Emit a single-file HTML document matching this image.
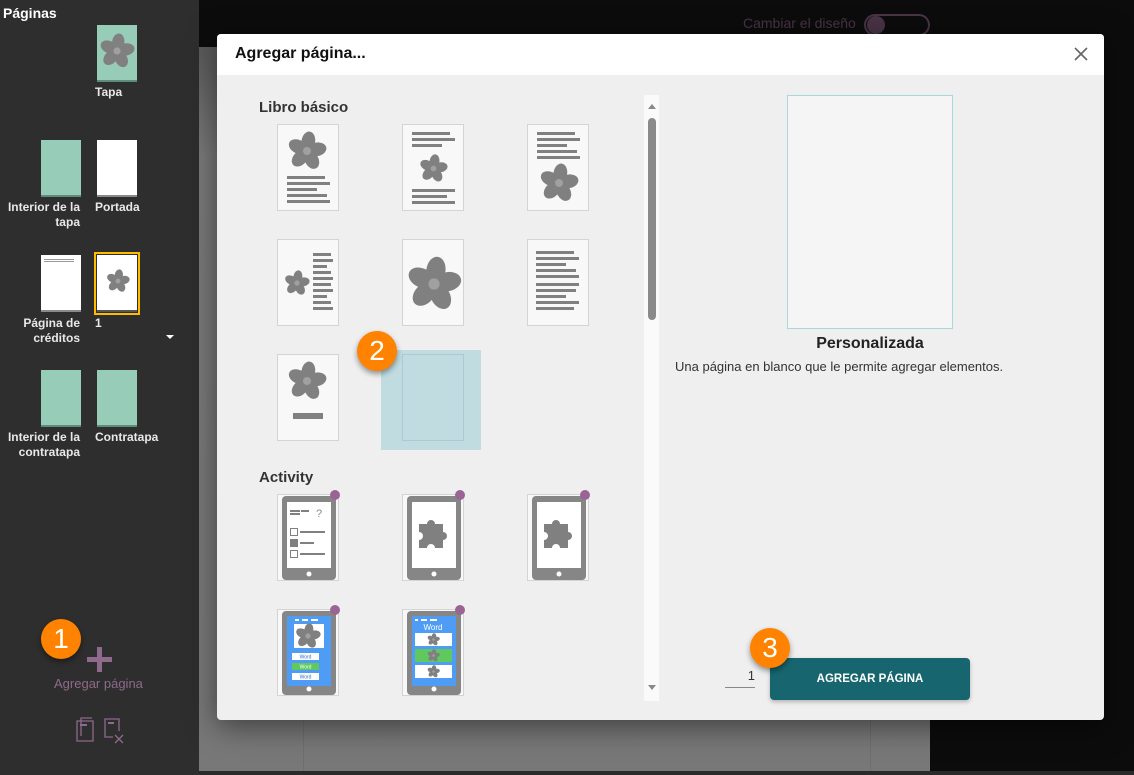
<!DOCTYPE html>
<html><head><meta charset="utf-8">
<style>
*{box-sizing:border-box;margin:0;padding:0}
body{width:1134px;height:775px;overflow:hidden;background:#0c0c0c;font-family:"Liberation Sans",sans-serif;position:relative}
.a{position:absolute}
.side{left:0;top:0;width:199px;height:775px;background:#2e2e2e}
.lbl{color:#e8e8e8;font-size:12px;line-height:15px;font-weight:bold}
.th{position:absolute;width:40px;height:57px;border-bottom:2px solid #8a8a8a}
.g{background:#97cdb8;border-bottom-color:#5f8c7a}
.w{background:#fff}
.mod{left:217px;top:34px;width:887px;height:686px;background:#efefef;border-radius:4px;overflow:hidden;box-shadow:0 6px 30px rgba(0,0,0,.5)}
.hd{left:0;top:0;width:887px;height:41px;background:#fff}
.t{position:absolute;width:62px;height:87px;background:#f8f8f8;border:1px solid #d4d4d4}
.badge{position:absolute;width:40px;height:40px;border-radius:50%;background:#ff8200;color:#fff;font-size:28px;text-align:center;line-height:40px;box-shadow:0 3px 6px rgba(0,0,0,.4)}
.h{font-weight:bold;color:#333;font-size:15px}
</style></head><body>
<svg width="0" height="0" style="position:absolute">
<defs>
<g id="fl">
<ellipse cx="50" cy="25" rx="17" ry="24" fill="#808080" transform="rotate(8 50 50)"/>
<ellipse cx="50" cy="25" rx="17" ry="24" fill="#808080" transform="rotate(80 50 50)"/>
<ellipse cx="50" cy="25" rx="17" ry="24" fill="#808080" transform="rotate(152 50 50)"/>
<ellipse cx="50" cy="25" rx="17" ry="24" fill="#808080" transform="rotate(224 50 50)"/>
<ellipse cx="50" cy="25" rx="17" ry="24" fill="#808080" transform="rotate(296 50 50)"/>
<circle cx="50" cy="50" r="10" fill="#a0a0a0"/>
</g>
<g id="tab">
<rect x="4" y="1" width="54" height="84" rx="4" fill="#868686"/>
<circle cx="31" cy="79" r="2.5" fill="#fff"/>
</g>
<g id="puz">
<path d="M16 29h8a4 4 0 1 1 8 0h8v8a4 4 0 1 1 0 8v8h-8a4 4 0 1 0 -8 0h-8v-8a4 4 0 1 0 0-8z" fill="#808080"/>
</g>
</defs>
</svg>

<div class="a" style="left:199px;top:47px;width:731px;height:725px;background:linear-gradient(#5a5a5a,#7a7a7a 15%,#787878)"></div>
<div class="a" style="left:303px;top:47px;width:1px;height:725px;background:#6a7070"></div>
<div class="a" style="left:870px;top:47px;width:1px;height:725px;background:#6a7070"></div>
<div class="a" style="left:0;top:771px;width:1134px;height:4px;background:#2a2a2a"></div>
<div class="a" style="left:743px;top:15px;color:#4a3447;font-size:14px">Cambiar el diseño</div>
<div class="a" style="left:864px;top:14px;width:66px;height:22px;border:2px solid #4a3447;border-radius:11px"></div>
<div class="a" style="left:867px;top:16px;width:18px;height:18px;border-radius:50%;background:#4a3447"></div>

<div class="a side">
<div class="a" style="left:3px;top:5px;color:#fff;font-weight:bold;font-size:14px">Páginas</div>
<div class="th g" style="left:97px;top:25px"><svg class="a" style="left:2px;top:8px" width="36" height="36" viewBox="0 0 100 100"><use href="#fl"/></svg></div>
<div class="a lbl" style="left:95px;top:85px">Tapa</div>
<div class="th g" style="left:41px;top:140px"></div>
<div class="th w" style="left:97px;top:140px"></div>
<div class="a lbl" style="left:0;width:80px;text-align:right;top:200px">Interior de la tapa</div>
<div class="a lbl" style="left:95px;top:200px">Portada</div>
<div class="th w" style="left:41px;top:255px"><div class="a" style="left:3px;top:4px;width:30px;height:4px;background:repeating-linear-gradient(#999 0 1px,#fff 1px 2px)"></div></div>
<div class="a" style="left:94px;top:252px;width:46px;height:63px;border:2px solid #ffbb00"></div>
<div class="th w" style="left:97px;top:255px;border-bottom-color:#555"><svg class="a" style="left:9px;top:14px" width="24" height="24" viewBox="0 0 100 100"><use href="#fl"/></svg></div>
<div class="a lbl" style="left:0;width:80px;text-align:right;top:316px">Página de créditos</div>
<div class="a lbl" style="left:95px;top:316px">1</div>
<div class="a" style="left:166px;top:335px;border-left:4px solid transparent;border-right:4px solid transparent;border-top:4px solid #fff"></div>
<div class="th g" style="left:41px;top:370px"></div>
<div class="th g" style="left:97px;top:370px"></div>
<div class="a lbl" style="left:0;width:80px;text-align:right;top:430px">Interior de la contratapa</div>
<div class="a lbl" style="left:95px;top:430px">Contratapa</div>
<div class="a" style="left:87px;top:657px;width:25px;height:5px;background:#8e6a8c"></div>
<div class="a" style="left:97px;top:647px;width:5px;height:25px;background:#8e6a8c"></div>
<div class="a" style="left:54px;top:676px;color:#8e6a8c;font-size:13px">Agregar página</div>
<svg class="a" style="left:74px;top:716px" width="52" height="30" viewBox="0 0 52 30" fill="none" stroke="#8e6a8c" stroke-width="1.3">
<path d="M7 20V2h11M3 25V5h16v20z"/><path d="M6 9h7" stroke-width="2"/>
<path d="M31 18V3h14v12M31 18v3h8"/><path d="M34 7h6" stroke-width="2"/><path d="M41 19l8 8M49 19l-8 8"/>
</svg>
</div>
<div class="badge" style="left:41px;top:619px">1</div>

<div class="a mod">
<div class="a hd"><div class="a" style="left:18px;top:11px;font-weight:bold;font-size:16px;color:#111">Agregar página...</div>
<svg class="a" style="left:857px;top:13px" width="14" height="14" viewBox="0 0 14 14" stroke="#666" stroke-width="1.6"><path d="M1 1l12 12M13 1L1 13"/></svg></div>
<div class="a h" style="left:42px;top:65px">Libro básico</div>
<div class="a h" style="left:42px;top:435px">Activity</div>
<div class="a" style="left:427px;top:61px;width:15px;height:606px;background:#fafafa"></div>
<div class="a" style="left:431px;top:70px;border-left:4px solid transparent;border-right:4px solid transparent;border-bottom:5px solid #888"></div>
<div class="a" style="left:431px;top:84px;width:8px;height:202px;border-radius:4px;background:#8a8a8a"></div>
<div class="a" style="left:431px;top:651px;border-left:4px solid transparent;border-right:4px solid transparent;border-top:5px solid #888"></div>
<div class="t" style="left:60px;top:90px"><svg width="60" height="85" viewBox="0 0 60 85"><svg x="9" y="6" width="40" height="40" viewBox="0 0 100 100"><use href="#fl"/></svg><g fill="#808080"><rect x="9" y="51" width="38" height="3"/><rect x="9" y="57" width="43" height="3"/><rect x="9" y="63" width="30" height="3"/><rect x="9" y="69" width="40" height="3"/><rect x="9" y="75" width="43" height="3"/></g></svg></div>
<div class="t" style="left:185px;top:90px"><svg width="60" height="85" viewBox="0 0 60 85"><g fill="#808080"><rect x="9" y="7" width="38" height="3"/><rect x="9" y="13" width="43" height="3"/><rect x="9" y="19" width="30" height="3"/><rect x="9" y="64" width="43" height="3"/><rect x="9" y="70" width="35" height="3"/><rect x="9" y="76" width="43" height="3"/></g><svg x="16" y="29" width="29" height="29" viewBox="0 0 100 100"><use href="#fl"/></svg></svg></div>
<div class="t" style="left:310px;top:90px"><svg width="60" height="85" viewBox="0 0 60 85"><g fill="#808080"><rect x="9" y="7" width="38" height="3"/><rect x="9" y="13" width="43" height="3"/><rect x="9" y="19" width="30" height="3"/><rect x="9" y="25" width="40" height="3"/><rect x="9" y="31" width="43" height="3"/></g><svg x="11" y="38" width="40" height="40" viewBox="0 0 100 100"><use href="#fl"/></svg></svg></div>
<div class="t" style="left:60px;top:205px"><svg width="60" height="85" viewBox="0 0 60 85"><svg x="6" y="30" width="26" height="26" viewBox="0 0 100 100"><use href="#fl"/></svg><g fill="#808080"><rect x="35" y="13" width="18" height="3"/><rect x="35" y="19" width="20" height="3"/><rect x="35" y="25" width="14" height="3"/><rect x="35" y="31" width="18" height="3"/><rect x="35" y="37" width="20" height="3"/><rect x="35" y="43" width="18" height="3"/><rect x="35" y="49" width="20" height="3"/><rect x="35" y="55" width="14" height="3"/><rect x="35" y="61" width="18" height="3"/><rect x="35" y="67" width="20" height="3"/></g></svg></div>
<div class="t" style="left:185px;top:205px"><svg width="60" height="85" viewBox="0 0 60 85"><svg x="3" y="16" width="56" height="56" viewBox="0 0 100 100"><use href="#fl"/></svg></svg></div>
<div class="t" style="left:310px;top:205px"><svg width="60" height="85" viewBox="0 0 60 85"><g fill="#808080"><rect x="8" y="11" width="38" height="3"/><rect x="8" y="17" width="43" height="3"/><rect x="8" y="23" width="30" height="3"/><rect x="8" y="29" width="40" height="3"/><rect x="8" y="35" width="43" height="3"/><rect x="8" y="43" width="43" height="3"/><rect x="8" y="49" width="40" height="3"/><rect x="8" y="55" width="30" height="3"/><rect x="8" y="61" width="43" height="3"/><rect x="8" y="67" width="38" height="3"/></g></svg></div>
<div class="t" style="left:60px;top:320px"><svg width="60" height="85" viewBox="0 0 60 85"><svg x="9" y="6" width="40" height="40" viewBox="0 0 100 100"><use href="#fl"/></svg><rect x="15" y="58" width="30" height="6" fill="#808080"/></svg></div>
<div class="a" style="left:164px;top:316px;width:100px;height:100px;background:#c0dce0"></div>
<div class="a" style="left:185px;top:320px;width:62px;height:87px;border:1px solid #a8ccd0"></div>
<div class="t" style="left:60px;top:460px"><svg width="60" height="85" viewBox="0 0 60 85"><use href="#tab"/><rect x="9" y="7" width="44" height="66" fill="#fff"/><g fill="#808080"><rect x="12" y="15" width="10" height="2"/><rect x="12" y="18" width="10" height="2"/><rect x="23" y="15" width="8" height="2"/></g><text x="38" y="22" font-size="11" fill="#888" font-family="Liberation Sans">?</text><g fill="none" stroke="#808080"><rect x="12.5" y="33.5" width="7" height="7"/><rect x="12.5" y="44.5" width="7" height="7" fill="#808080"/><rect x="12.5" y="55.5" width="7" height="7"/></g><g fill="#808080"><rect x="22" y="36" width="25" height="2"/><rect x="22" y="47" width="14" height="2"/><rect x="22" y="58" width="25" height="2"/></g></svg><div class="a" style="left:52px;top:-5px;width:10px;height:10px;border-radius:50%;background:#9a6595"></div></div>
<div class="t" style="left:185px;top:460px"><svg width="60" height="85" viewBox="0 0 60 85"><use href="#tab"/><rect x="9" y="7" width="44" height="66" fill="#fff"/><use href="#puz"/></svg><div class="a" style="left:52px;top:-5px;width:10px;height:10px;border-radius:50%;background:#9a6595"></div></div>
<div class="t" style="left:310px;top:460px"><svg width="60" height="85" viewBox="0 0 60 85"><use href="#tab"/><rect x="9" y="7" width="44" height="66" fill="#fff"/><use href="#puz"/></svg><div class="a" style="left:52px;top:-5px;width:10px;height:10px;border-radius:50%;background:#9a6595"></div></div>
<div class="t" style="left:60px;top:575px"><svg width="60" height="85" viewBox="0 0 60 85"><use href="#tab"/><rect x="9" y="6" width="44" height="70" fill="#4f9cf5"/><g fill="#fff"><rect x="17" y="9" width="4" height="2"/><rect x="24" y="9" width="6" height="2"/><rect x="33" y="9" width="7" height="2"/><rect x="16" y="14" width="30" height="24"/><rect x="14" y="43" width="27" height="7"/><rect x="14" y="63" width="27" height="7"/></g><rect x="14" y="53" width="27" height="7" fill="#5fc85f"/><svg x="17" y="13" width="26" height="26" viewBox="0 0 100 100"><use href="#fl"/></svg><g font-size="5" font-family="Liberation Sans" text-anchor="middle"><text x="27.5" y="48.5" fill="#2a6ad0">Word</text><text x="27.5" y="58.5" fill="#fff">Word</text><text x="27.5" y="68.5" fill="#2a6ad0">Word</text></g></svg><div class="a" style="left:52px;top:-5px;width:10px;height:10px;border-radius:50%;background:#9a6595"></div></div>
<div class="t" style="left:185px;top:575px"><svg width="60" height="85" viewBox="0 0 60 85"><use href="#tab"/><rect x="9" y="6" width="44" height="70" fill="#4f9cf5"/><g fill="#fff"><rect x="12" y="9" width="3" height="2"/><rect x="18" y="9" width="6" height="2"/><rect x="27" y="9" width="7" height="2"/><rect x="12" y="23" width="37" height="13"/><rect x="12" y="55" width="37" height="13"/></g><rect x="12" y="39" width="37" height="13" fill="#5fc85f"/><text x="30" y="20" font-size="8" fill="#fff" text-anchor="middle" font-family="Liberation Sans">Word</text><svg x="24" y="23" width="13" height="13" viewBox="0 0 100 100"><use href="#fl"/></svg><svg x="24" y="39" width="13" height="13" viewBox="0 0 100 100"><use href="#fl"/></svg><svg x="24" y="55" width="13" height="13" viewBox="0 0 100 100"><use href="#fl"/></svg></svg><div class="a" style="left:52px;top:-5px;width:10px;height:10px;border-radius:50%;background:#9a6595"></div></div>
<div class="a" style="left:570px;top:61px;width:166px;height:234px;background:#f5f5f5;border:1px solid #a8d8df"></div>
<div class="a" style="left:453px;width:400px;text-align:center;top:301px;font-weight:bold;font-size:16px;color:#222">Personalizada</div>
<div class="a" style="left:458px;top:325px;font-size:13px;color:#333">Una página en blanco que le permite agregar elementos.</div>
<div class="a" style="left:508px;top:634px;width:30px;border-bottom:1px solid #888;text-align:right;font-size:13px;color:#333;padding-bottom:4px">1</div>
<div class="a" style="left:553px;top:624px;width:200px;height:42px;background:#17666f;border-radius:4px;color:#fff;font-weight:bold;font-size:11.5px;text-align:center;line-height:42px;box-shadow:0 2px 4px rgba(0,0,0,.25)">AGREGAR PÁGINA</div>
</div>
<div class="badge" style="left:357px;top:331px">2</div>
<div class="badge" style="left:750px;top:628px">3</div>
</body></html>
